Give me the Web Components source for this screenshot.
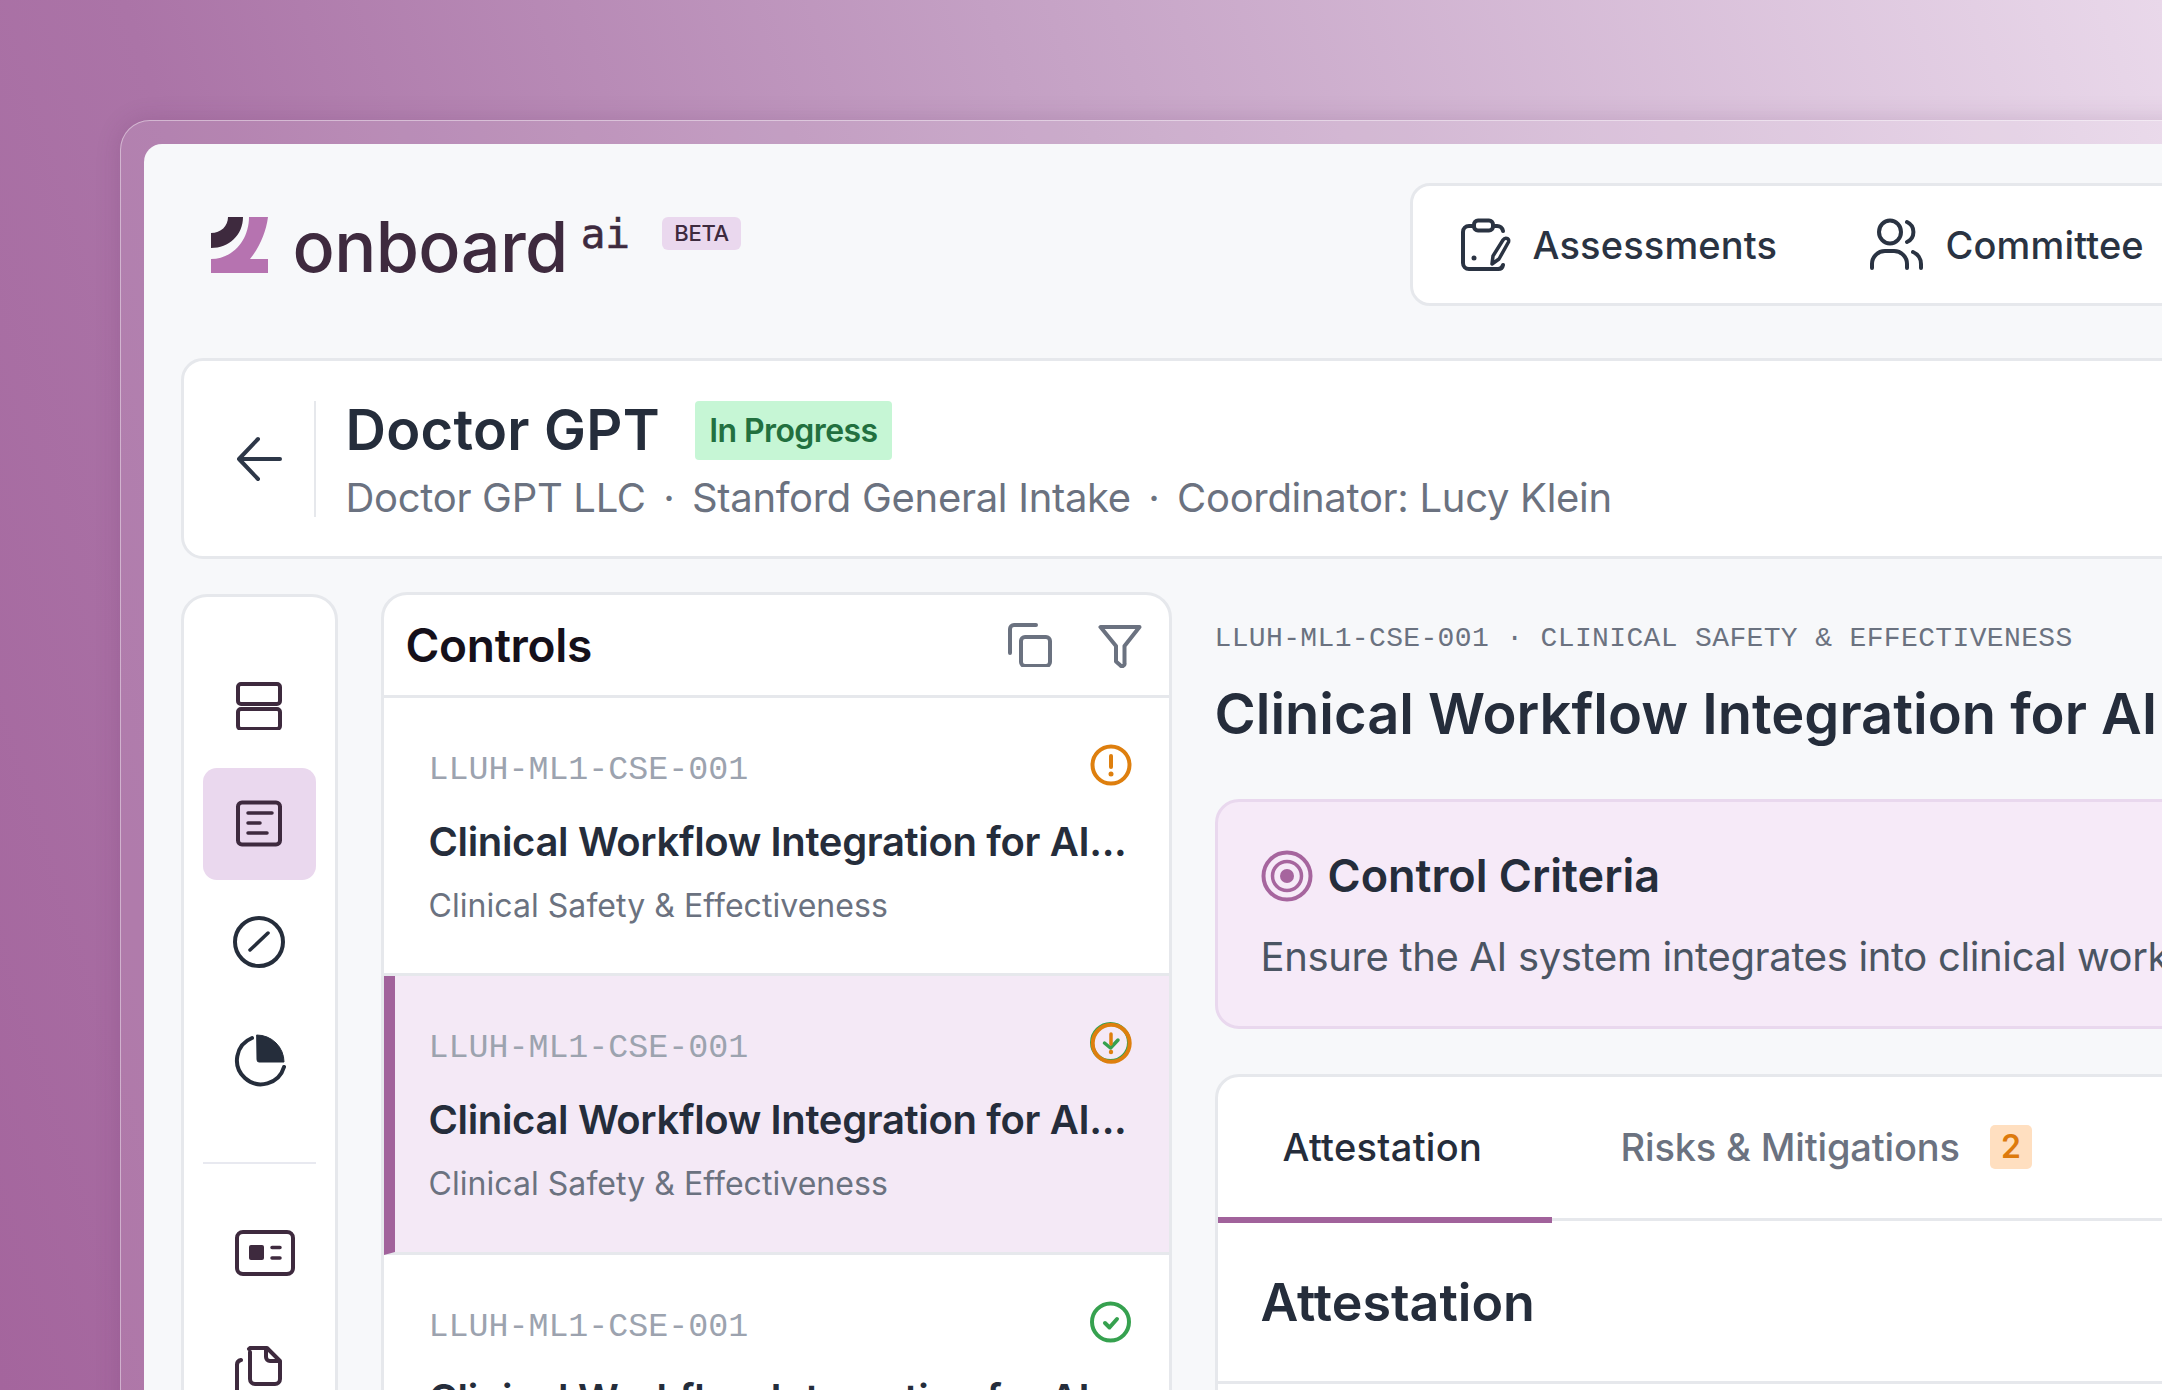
<!DOCTYPE html>
<html lang="en"><head><meta charset="utf-8"><title>onboard ai</title>
<style>
html,body{margin:0;padding:0;width:2162px;height:1390px;overflow:hidden;background:#a5669e}
body{font-family:Inter,"Liberation Sans",sans-serif;color:#252d3b}
</style></head><body>
<app-stage>
  <app-header></app-header>
  <project-card></project-card>
  <work-area></work-area>
</app-stage>
<script>
const def=(name,html)=>customElements.define(name,class extends HTMLElement{
  connectedCallback(){ if(this.shadowRoot) return; const r=this.attachShadow({mode:'open'}); r.innerHTML=typeof html==='function'?html(this):html; }
});
const MONO='"Liberation Mono","DejaVu Sans Mono",monospace';
const LINE='#e6e8ec', GRAY='#6b7280';

def('app-stage',`<style>
:host{display:block;width:2162px;height:1390px;overflow:hidden;box-sizing:border-box;padding:120px 0 0 120px;
background:linear-gradient(72deg,#a4659d 0%,#ab74a7 22%,#c4a0c4 55%,#e9d8ea 100%)}
.frame{width:2300px;height:1500px;box-sizing:border-box;padding:22.5px;border:1.5px solid rgba(255,255,255,.42);border-radius:30px;background:rgba(255,255,255,.1);box-shadow:0 0 24px rgba(90,40,90,.18)}
.app{height:100%;background:#f7f8fa;border-radius:18px;box-sizing:border-box;padding:39px 0 0 37px}
</style><div class="frame"><div class="app"><slot></slot></div></div>`);

def('app-header',`<style>
:host{display:flex;height:123px;align-items:flex-start}
.logo{width:1229px;box-sizing:border-box;padding:34px 0 0 30px;display:flex;align-items:flex-start;height:123px}
svg.mark{width:58px;height:57px;flex:none;margin-right:24px}
.word{font-size:70px;font-weight:500;line-height:70px;color:#3e2a3e;letter-spacing:-.6px;margin-top:-5px}
.ai{font-family:"DejaVu Sans Mono",monospace;font-size:41px;line-height:48px;color:#3e2a3e;margin:-7px 0 0 13px;font-weight:500;-webkit-text-stroke:.6px #3e2a3e}
.beta{margin:0 0 0 32px;width:79px;height:33px;background:#ead8ee;border-radius:6px;color:#3e2a3e;font-size:22px;font-weight:500;display:flex;align-items:center;justify-content:center;letter-spacing:-.3px}
nav{display:flex;align-items:center;width:900px;height:123px;box-sizing:border-box;background:#fff;border:3px solid ${LINE};border-radius:20px;padding-left:48px;color:#2a3342;font-size:38px;font-weight:500;letter-spacing:.15px}
nav svg{flex:none}
span.t1,span.t2{padding-top:2px}
.t1{margin-left:22px;width:336px}
.t2{margin-left:23px}
</style>
<div class="logo">
<svg class="mark" viewBox="211 217 58 57"><path fill="#3e2a3e" d="M228 217H243C243 235 229 248 211 248V233C221 233 228 226 228 217Z"/><path fill="#b673b0" d="M249 217H268C266 233 259 248 250 259H268V273H211V259C233 259 249 240 249 217Z"/></svg>
<span class="word">onboard</span><span class="ai">ai</span><span class="beta">BETA</span></div>
<nav>
<svg width="50" height="54" viewBox="0 0 50 54" fill="none" stroke="#2a3342" stroke-width="4" stroke-linecap="round" stroke-linejoin="round"><path d="M12 9H8A6 6 0 0 0 2 15V46A6 6 0 0 0 8 52H37A5 5 0 0 0 42 48M33 9H36A6 6 0 0 1 42 14"/><rect x="13" y="3.500" width="19" height="10" rx="4"/><path d="M42 23C44 20 48.500 21 47.500 25L38 42L31 47L32 39Z" stroke-width="3.500"/><circle cx="13" cy="41" r="2.500" fill="#2a3342" stroke="none"/></svg>
<span class="t1">Assessments</span>
<svg width="54" height="52" viewBox="0 0 54 52" fill="none" stroke="#2a3342" stroke-width="4" stroke-linecap="round"><ellipse cx="21" cy="14" rx="11" ry="11.500"/><path d="M38 4A11 11 0 0 1 38 24M3 50V46A13 13 0 0 1 16 33H25A13 13 0 0 1 38 46V50M44 34A13 13 0 0 1 52 46V50"/></svg>
<span class="t2">Committee</span>
</nav>`);

def('project-card',`<style>
:host{display:flex;box-sizing:border-box;width:2100px;height:201px;margin-top:52px;background:#fff;border:3px solid ${LINE};border-radius:22px;padding-top:40px;align-items:flex-start}
.back{box-sizing:border-box;width:130px;height:116px;padding-left:20px;display:flex;align-items:center;justify-content:center}
.sep{width:2px;height:116px;background:${LINE};flex:none}
.txt{margin-left:30px}
.row{display:flex;align-items:center;height:59px}
h1{margin:0;font-size:56px;line-height:59px;font-weight:600;color:#252d3b;letter-spacing:.25px}
.st{margin-left:35px;height:59px;width:197px;background:#c6f6d5;border-radius:4px;color:#22703f;font-size:32px;font-weight:600;letter-spacing:-.6px;display:flex;align-items:center;justify-content:center}
p{margin:14px 0 0;font-size:40px;line-height:48px;color:${GRAY};white-space:nowrap;letter-spacing:-.3px}
i{font-style:normal;margin:0 6.5px}
</style>
<div class="back"><svg width="46" height="46" viewBox="0 0 46 46" fill="none" stroke="#2d3748" stroke-width="4" stroke-linecap="round" stroke-linejoin="round"><path d="M44 23H3M22 3L3 23L22 43"/></svg></div>
<div class="sep"></div>
<div class="txt"><div class="row"><h1>Doctor GPT</h1><span class="st">In Progress</span></div>
<p>Doctor GPT LLC <i>·</i> Stanford General Intake <i>·</i> Coordinator: Lucy Klein</p></div>`);

def('work-area',`<style>
:host{display:grid;grid-template-columns:157px 791px 1000px;column-gap:43px;margin-top:33px;align-items:start}
</style><side-rail></side-rail><controls-panel></controls-panel><detail-pane></detail-pane>`);

const ink='#3e2a3e', slate='#252d3b';
def('side-rail',`<style>
:host{display:flex;flex-direction:column;align-items:center;box-sizing:border-box;margin-top:2px;height:900px;background:#fff;border:3px solid ${LINE};border-radius:26px;padding-top:53px;gap:6px}
.i{width:113px;height:112px;flex:none;display:flex;align-items:center;justify-content:center;border-radius:14px}
.on{background:#ead8ee}
hr{width:113px;height:2px;border:0;background:#e8e9f0;margin:40px 0 27px;flex:none}
svg{fill:none;stroke-width:4;stroke-linecap:round;stroke-linejoin:round}
.card{margin-left:12px}
</style>
<div class="i"><svg width="48" height="48" viewBox="0 0 48 48" stroke="${ink}"><rect x="3" y="2" width="42" height="20" rx="3"/><rect x="3" y="27" width="42" height="20" rx="3"/></svg></div>
<div class="i on"><svg width="48" height="48" viewBox="0 0 48 48" stroke="${ink}"><rect x="3" y="2.500" width="42" height="42" rx="4"/><path d="M13 13H37M13 23H25M13 33H32" stroke-width="3.500"/></svg></div>
<div class="i"><svg width="52" height="52" viewBox="0 0 52 52" stroke="${slate}"><circle cx="26" cy="26" r="24"/><path d="M17 34L35 17" stroke-width="3.500"/></svg></div>
<div class="i"><svg width="54" height="54" viewBox="0 0 54 54" stroke="${slate}"><path d="M20 5A24 24 0 1 0 52 34"/><path d="M25 2A27 27 0 0 1 52 29H27A2 2 0 0 1 25 27Z" fill="${slate}" stroke-width="1"/></svg></div>
<hr>
<div class="i"><svg class="card" width="62" height="48" viewBox="0 0 62 48" stroke="${ink}"><rect x="3" y="3" width="56" height="42" rx="6"/><rect x="15" y="16" width="15" height="15" rx="2" fill="${ink}" stroke="none"/><path d="M38 18.500H46M38 29H46" stroke-width="3.500"/></svg></div>
<div class="i"><svg width="48" height="52" viewBox="0 0 48 52" stroke="${ink}"><path d="M6 15A5 5 0 0 0 2 20V44A6 6 0 0 0 8 50H28"/><path d="M14 4A3 3 0 0 0 15 3H32L45 16V34A5 5 0 0 1 40 39H20A5 5 0 0 1 15 34V7"/><path d="M31 4V12A4 4 0 0 0 35 16H44"/></svg></div>`);

def('status-icon',(h)=>{
 const k=h.getAttribute('kind'), O='#de7f0e', G='#36a14f';
 const warn=`<circle cx="21" cy="21" r="18.500" stroke="${O}"/><path d="M21 12V23" stroke="${O}"/><circle cx="21" cy="30" r="2.500" fill="${O}" stroke="none"/>`;
 const ok=`<circle cx="20.500" cy="21" r="18.500" stroke="${G}"/><path d="M15 22L19.500 26.500L27 18" stroke="${G}"/>`;
 const both=`<circle cx="20.500" cy="20.500" r="18.500" stroke="${G}"/><path d="M14.500 21L20.500 26L28 18" stroke="${G}" stroke-width="3.500"/><circle cx="21.200" cy="21.300" r="18.500" stroke="${O}"/><path d="M21 12V22" stroke="${O}" stroke-width="3.500"/><circle cx="21" cy="30" r="2.200" fill="${O}" stroke="none"/>`;
 return `<style>:host{display:block;width:42px;height:42px;flex:none;margin-top:-1px}svg{display:block;fill:none;stroke-width:4;stroke-linecap:round;stroke-linejoin:round}</style><svg width="42" height="42" viewBox="0 0 42 42">${k==='warn'?warn:k==='ok'?ok:both}</svg>`;
});

def('control-row',(h)=>{
 const on=h.hasAttribute('active');
 return `<style>
:host{display:block;box-sizing:border-box;height:278.5px;border-bottom:3px solid ${LINE};padding:47px 37px 0 45px;${on?'background:#f4e9f6;border-left:11px solid #a1629b;padding-left:34px;':''}}
.top{display:flex;justify-content:space-between;align-items:flex-start;height:48px}
.id{font-family:${MONO};font-size:33.3px;line-height:48px;color:#9ca3af;margin-top:1px}
.t{margin:25px 0 0;font-size:40px;line-height:48px;font-weight:600;letter-spacing:-.35px;color:#252d3b;white-space:nowrap}
.s{margin-top:18px;font-size:32px;line-height:44px;color:${GRAY};white-space:nowrap;letter-spacing:.05px}
</style><div class="top"><span class="id">LLUH-ML1-CSE-001</span><status-icon kind="${h.getAttribute('kind')}"></status-icon></div>
<div class="t">Clinical Workflow Integration for AI...</div><div class="s">Clinical Safety &amp; Effectiveness</div>`;
});

def('controls-panel',`<style>
:host{display:block;box-sizing:border-box;height:900px;background:#fff;border:3px solid ${LINE};border-radius:26px;overflow:hidden}
.h{box-sizing:border-box;height:103px;border-bottom:3px solid ${LINE};display:flex;align-items:center;padding:0 27px 0 22px}
h2{margin:0;font-size:46px;line-height:56px;font-weight:600;letter-spacing:-.3px;color:#15101a;flex:1}
svg{fill:none;stroke:${GRAY};stroke-width:4;stroke-linecap:round;stroke-linejoin:round;flex:none;display:block}
.f{margin:3px 0 0 46px}
</style><div class="h"><h2>Controls</h2>
<svg width="44" height="44" viewBox="0 0 44 44"><path d="M2 30V6A4 4 0 0 1 6 2H28"/><rect x="13" y="14" width="29" height="29" rx="4"/></svg>
<svg class="f" width="44" height="44" viewBox="0 0 44 44"><path d="M2.500 3H41.500L26.500 22V39A2.500 2.500 0 0 1 22 41L18 37.500V22Z"/></svg></div>
<control-row kind="warn"></control-row><control-row kind="both" active></control-row><control-row kind="ok"></control-row>`);

def('detail-pane',`<style>
:host{display:block;width:1000px;padding-top:27.500px}
.bc{font-family:${MONO};font-size:28px;line-height:40px;letter-spacing:.36px;color:${GRAY};white-space:nowrap}
h1{margin:19px 0 0;font-size:56px;line-height:72px;font-weight:600;color:#252d3b;white-space:nowrap}
.crit{margin-top:49px;box-sizing:border-box;height:230px;background:#f6eaf8;border:3px solid #e9d8ee;border-radius:24px;padding:46px 0 0 43px}
.ct{display:flex;align-items:center;gap:15px;font-size:45px;line-height:56px;font-weight:600;color:#252d3b;margin-left:0}
.cb{margin-top:25px;font-size:40px;line-height:56px;letter-spacing:-.35px;color:#4b5563;white-space:nowrap}
.tabs{margin-top:45px;box-sizing:border-box;height:500px;background:#fff;border:3px solid ${LINE};border-radius:24px}
.tr{display:flex;height:144px;box-sizing:border-box;border-bottom:3px solid ${LINE};font-size:38px;line-height:56px;font-weight:450}
.tb{box-sizing:border-box;display:flex;align-items:center;height:146px}
.a{width:334px;padding-left:65px;border-bottom:6px solid #a1629b;color:#252d3b;font-weight:500;letter-spacing:.3px}
.b{margin-left:69px;color:${GRAY};padding-bottom:6px;letter-spacing:-.15px}
.n{margin-left:30px;width:42px;height:44px;border-radius:5px;background:#ffdfc0;color:#dd7a0d;font-size:32px;font-weight:600;display:flex;align-items:center;justify-content:center}
.sec{box-sizing:border-box;height:163px;border-bottom:3px solid ${LINE};padding:50px 0 0 43px}
h3{margin:0;font-size:52px;line-height:64px;font-weight:600;color:#252d3b}
</style>
<div class="bc">LLUH-ML1-CSE-001 · CLINICAL SAFETY &amp; EFFECTIVENESS</div>
<h1>Clinical Workflow Integration for AI Systems</h1>
<div class="crit"><div class="ct"><svg width="52" height="52" viewBox="0 0 52 52" fill="none" stroke="#a6659e"><circle cx="26" cy="26" r="23.500" stroke-width="4"/><circle cx="26" cy="26" r="14.500" stroke-width="3.500"/><circle cx="26" cy="26" r="7" fill="#a6659e" stroke="none"/></svg>Control Criteria</div>
<div class="cb">Ensure the AI system integrates into clinical workflows safely and effectively</div></div>
<div class="tabs"><div class="tr"><div class="tb a">Attestation</div><div class="tb b">Risks &amp; Mitigations<span class="n">2</span></div></div>
<div class="sec"><h3>Attestation</h3></div></div>`);
</script>
</body></html>
